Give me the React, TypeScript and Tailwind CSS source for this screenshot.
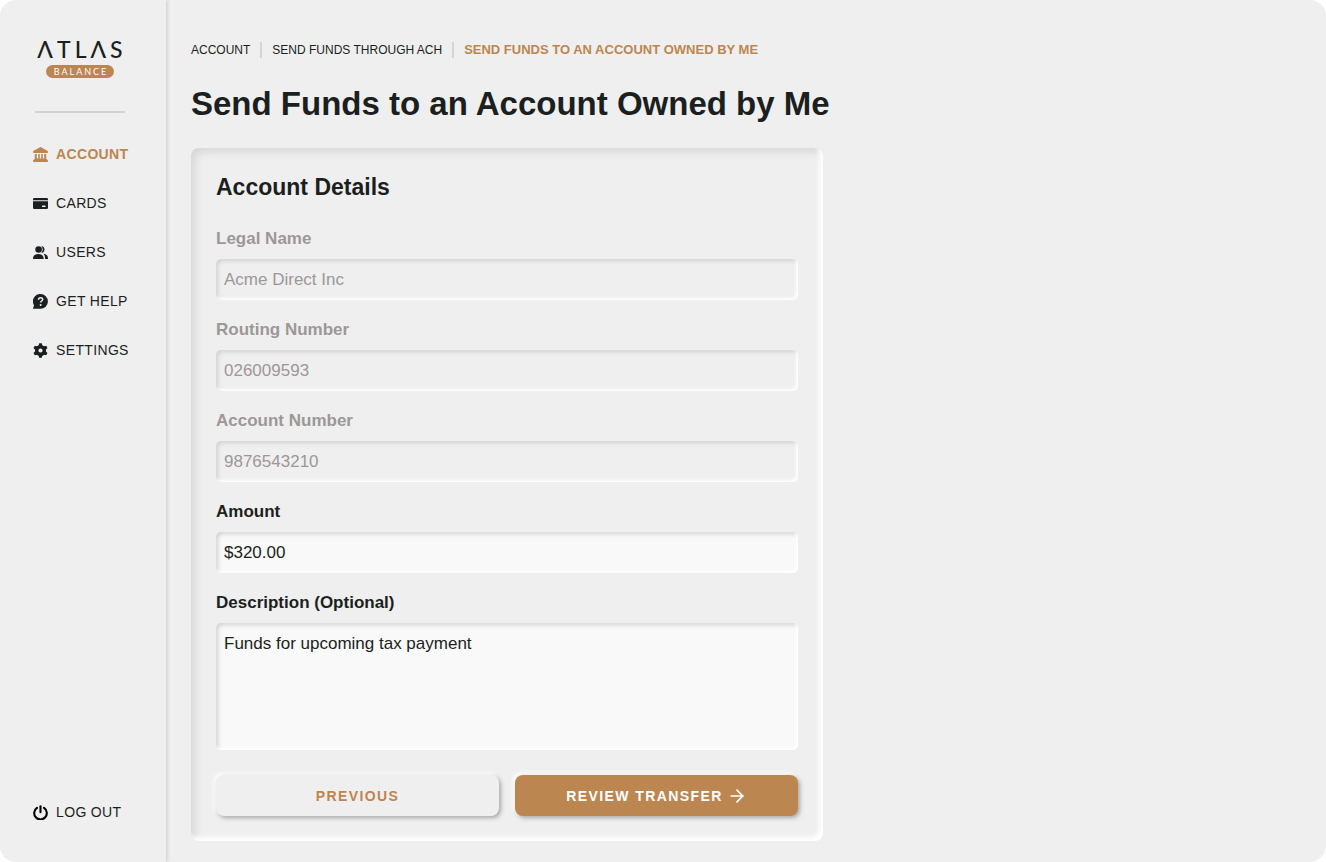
import type { ReactNode } from "react";
import clsx from "clsx";
import { ArrowRight } from "lucide-react";

interface NavItem {
  label: string;
  icon: ReactNode;
  active?: boolean;
}

const iconClass = "w-[15px] h-[15px] shrink-0";

function BankIcon() {
  return (
    <svg viewBox="0 0 15 15" className={iconClass} fill="currentColor" aria-hidden="true">
      <path d="M7 .2a1 1 0 0 1 1 0l6.300 3.500c.4.2.7.6.7 1v.6c0 .4-.3.700-.700.700H.700A.7.7 0 0 1 0 5.300v-.6c0-.4.3-.8.7-1Z" />
      <path d="M1.800 7h2v4.600h1.400V7h1.600v4.600h1.400V7h1.600v4.600h1.400V7h2v4.700l1.400 1.200c.2.200.4.500.4.800v.6c0 .4-.3.700-.7.700H.7a.7.7 0 0 1-.7-.7v-.6c0-.3.200-.6.4-.8l1.400-1.200Z" />
    </svg>
  );
}

function CardIcon() {
  return (
    <svg viewBox="0 0 15 15" className={iconClass} fill="currentColor" aria-hidden="true">
      <path d="M1.300 2h12.400A1.300 1.300 0 0 1 15 3.300v.900H0v-.900A1.300 1.300 0 0 1 1.300 2Z" />
      <path
        fillRule="evenodd"
        d="M0 5.200h15v6.500a1.300 1.300 0 0 1-1.300 1.300H1.300A1.300 1.300 0 0 1 0 11.700ZM9.500 9.400a.5.5 0 0 0-.5.5v.6a.5.5 0 0 0 .5.5h2.600a.5.5 0 0 0 .5-.5v-.6a.5.5 0 0 0-.5-.5Z"
      />
    </svg>
  );
}

function UsersIcon() {
  return (
    <svg viewBox="0 0 15 15" className={iconClass} fill="currentColor" aria-hidden="true">
      <circle cx="5.600" cy="4.500" r="3.300" />
      <path d="M0 14v-.8c0-2.600 2.200-4.300 5.300-4.300s5.300 1.700 5.300 4.300v.8Z" />
      <path d="M8.800 1.300a3.300 3.300 0 0 1 0 6.400c1.500-1.900 1.500-4.500 0-6.400Z" stroke="currentColor" strokeWidth=".5" />
      <path d="M10.400 8.700c2.700.2 4.600 1.900 4.600 4.400v.9h-3v-.9c0-1.800-.5-3.300-1.600-4.400Z" />
    </svg>
  );
}

function HelpIcon() {
  return (
    <svg viewBox="0 0 15 15" className={iconClass} aria-hidden="true">
      <path fill="currentColor" d="M7.500 0a7.400 7.400 0 1 1 0 14.800H.6a.6.6 0 0 1-.5-.9l1-2.500A7.400 7.400 0 0 1 7.500 0Z" />
      <path
        d="M5.500 5.700c0-1.200.9-1.900 2.100-1.900s2.100.7 2.100 1.700c0 1.500-2.100 1.500-2.100 3.100"
        fill="none"
        stroke="#efefef"
        strokeWidth="1.500"
      />
      <circle cx="7.600" cy="10.900" r="1" fill="#efefef" />
    </svg>
  );
}

function GearIcon() {
  return (
    <svg viewBox="0 0 15 15" className={iconClass} aria-hidden="true">
      <circle cx="7.500" cy="7.500" r="3.800" fill="none" stroke="currentColor" strokeWidth="3.400" />
      {[0, 60, 120, 180, 240, 300].map((angle) => (
        <path key={angle} d="M6.200.2h2.600l.8 3H5.400Z" fill="currentColor" transform={`rotate(${angle} 7.500 7.500)`} />
      ))}
    </svg>
  );
}

function PowerIcon() {
  return (
    <svg viewBox="0 0 15 15" className={clsx(iconClass, "text-black")} fill="none" stroke="currentColor" strokeWidth="2.100" strokeLinecap="round" aria-hidden="true">
      <path d="M7.500 1.200v6" />
      <path d="M4 2.900a6.300 6.300 0 1 0 7 0" />
    </svg>
  );
}

const navItems: NavItem[] = [
  { label: "Account", icon: <BankIcon />, active: true },
  { label: "Cards", icon: <CardIcon /> },
  { label: "Users", icon: <UsersIcon /> },
  { label: "Get Help", icon: <HelpIcon /> },
  { label: "Settings", icon: <GearIcon /> },
];

const lockedFields = [
  { id: "legal-name", label: "Legal Name", value: "Acme Direct Inc" },
  { id: "routing-number", label: "Routing Number", value: "026009593" },
  { id: "account-number", label: "Account Number", value: "9876543210" },
];

const fieldClass =
  "block w-full rounded-[5px] px-2 text-[17px] leading-6 outline-none shadow-[inset_-2px_-2px_3px_#ffffff,inset_2px_2px_4px_#d2d2d2]";

function Logo() {
  return (
    <div className="flex flex-col items-center font-[family-name:Lato,'Open_Sans',sans-serif]" role="img" aria-label="Atlas Balance">
      <span className="pl-1 text-[23px] leading-6 font-medium tracking-[4px]">ΛTLΛS</span>
      <span className="mt-1 rounded-full bg-[#bc8650] pl-2 pr-[6px] text-[9px] leading-[13px] tracking-[2px] text-white">BALANCE</span>
    </div>
  );
}

function Sidebar() {
  return (
    <aside className="flex w-[166px] shrink-0 flex-col pl-[33px] pr-[39px] pt-[37px] pb-10 shadow-[1px_0_4px_#c8c8c8]">
      <Logo />
      <hr className="mt-[33px] mx-[2px] border-t-2 border-[#d2d2d2]" />
      <nav className="mt-[29px] flex flex-col gap-[25px]">
        {navItems.map((item) => (
          <a
            key={item.label}
            href="#"
            className={clsx(
              "flex items-center gap-2 whitespace-nowrap text-sm leading-6 uppercase tracking-wide",
              item.active && "font-bold text-[#bc8650]"
            )}
          >
            {item.icon}
            {item.label}
          </a>
        ))}
      </nav>
      <button type="button" className="mt-auto flex items-center gap-2 text-sm whitespace-nowrap uppercase tracking-wide">
        <PowerIcon />
        Log Out
      </button>
    </aside>
  );
}

function Breadcrumbs() {
  return (
    <nav className="flex items-center gap-[10px] text-xs leading-4 uppercase" aria-label="Breadcrumb">
      <a href="#">Account</a>
      <span className="h-4 w-[2px] bg-[#d9d4d4]" />
      <a href="#">Send Funds Through ACH</a>
      <span className="h-4 w-[2px] bg-[#d9d4d4]" />
      <a href="#" aria-current="page" className="text-[13px] font-bold text-[#bc8650]">
        Send Funds to an Account Owned by Me
      </a>
    </nav>
  );
}

export default function App() {
  return (
    <div className="min-h-screen bg-white">
      <div className="flex min-h-screen overflow-hidden rounded-2xl bg-[#efefef] font-['Liberation_Sans',Arial,sans-serif] text-[#1b1f20]">
        <Sidebar />

        <main className="min-w-0 flex-1 px-[25px] pt-[42px] pb-5">
          <Breadcrumbs />
          <h1 className="mt-[26px] text-[33px] leading-10 font-bold">Send Funds to an Account Owned by Me</h1>

          <form className="mt-6 max-w-[632px] rounded-lg p-[25px] shadow-[inset_-4px_-4px_5px_#ffffff,inset_4px_4px_8px_#d6d6d6]">
            <h2 className="text-[23px] leading-7 font-bold">Account Details</h2>

            {/* Read-only account info */}
            {lockedFields.map((field, i) => (
              <div key={field.id} className={i === 0 ? "mt-[26px]" : "mt-[18px]"}>
                <label htmlFor={field.id} className="block text-[17px] leading-6 font-bold text-[#9d9797]">
                  {field.label}
                </label>
                <input id={field.id} disabled value={field.value} className={clsx(fieldClass, "mt-2 h-[41px] text-[#9d9797]")} />
              </div>
            ))}

            <div className="mt-[18px]">
              <label htmlFor="amount" className="block text-[17px] leading-6 font-bold">
                Amount
              </label>
              <input id="amount" defaultValue="$320.00" className={clsx(fieldClass, "mt-2 h-[41px] bg-[#f9f9f9]")} />
            </div>

            <div className="mt-[18px]">
              <label htmlFor="description" className="block text-[17px] leading-6 font-bold">
                Description (Optional)
              </label>
              <textarea
                id="description"
                defaultValue="Funds for upcoming tax payment"
                className={clsx(fieldClass, "mt-2 h-[127px] resize-none bg-[#f9f9f9] py-[9px]")}
              />
            </div>

            <div className="mt-[25px] grid grid-cols-2 gap-4">
              <button
                type="button"
                className="h-[41px] rounded-lg bg-[#efefef] text-sm font-bold uppercase tracking-widest text-[#bc8650] shadow-[2px_2px_4px_#a8a8a8,-2px_-2px_4px_#ffffff]"
              >
                Previous
              </button>
              <button
                type="submit"
                className="flex h-[41px] items-center justify-center gap-1 rounded-lg bg-[#bc8650] text-sm font-bold uppercase tracking-widest text-white shadow-[2px_2px_4px_#a8a8a8,-2px_-2px_4px_#ffffff]"
              >
                Review Transfer
                <ArrowRight className="h-5 w-5" strokeWidth={2} />
              </button>
            </div>
          </form>
        </main>
      </div>
    </div>
  );
}
